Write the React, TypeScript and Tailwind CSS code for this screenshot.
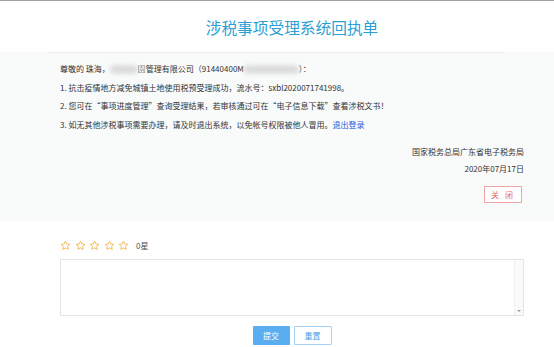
import React from "react";

function Star() {
  return (
    <svg width="11" height="11" viewBox="0 0 24 24" fill="none" stroke="#f4b650" strokeWidth="2" strokeLinejoin="round">
      <polygon points="12,2.5 14.9,8.6 21.5,9.4 16.6,13.9 17.9,20.5 12,17.2 6.1,20.5 7.4,13.9 2.5,9.4 9.1,8.6" />
    </svg>
  );
}

function Blur({ w }: { w: number }) {
  return (
    <span
      className="inline-block h-[9px] align-middle rounded-full bg-[#dcdcdc] blur-[2px]"
      style={{ width: w }}
    />
  );
}

export default function App() {
  const font = { fontFamily: '"Noto Sans CJK SC", "Noto Sans", sans-serif' };
  return (
    <div className="w-[554px] h-[347px] bg-white overflow-hidden border-t border-[#9ea2a6]" style={font}>
      <div className="h-[51px] flex items-center justify-center pl-[30px] pt-[3px]">
        <h1 className="text-[15.7px] leading-none text-[#2b9fd3] tracking-[0px]">涉税事项受理系统回执单</h1>
      </div>
      <div className="bg-[#f9fafa] pb-[18px]">
        <div className="ml-[48px] w-[455px] h-px bg-[#ececec]" />
        <div className="ml-[60px] w-[464px] pt-[7px] text-[8px] text-[#333]">
          <div className="leading-[18.5px] whitespace-nowrap">
            <p>
              尊敬的 珠海，<Blur w={28} />
              <span className="opacity-60">園</span>管理有限公司（91440400M<Blur w={55} />）：
            </p>
            <p>1. 抗击疫情地方减免城镇土地使用税预受理成功，流水号：sxbl2020071741998。</p>
            <p>2. 您可在“事项进度管理”查询受理结果，若审核通过可在“电子信息下载”查看涉税文书！</p>
            <p>
              3. 如无其他涉税事项需要办理，请及时退出系统，以免帐号权限被他人冒用。
              <span className="text-[#2b56e0]">退出登录</span>
            </p>
          </div>
          <div className="mt-[9px] flex flex-col items-end leading-[17px]">
            <p>国家税务总局广东省电子税务局</p>
            <p>2020年07月17日</p>
            <button className="mt-[9px] mr-[2px] w-[38px] h-[17px] border border-[#f2a5a5] bg-white text-[#e06666] text-[8px] leading-none tracking-[2px] flex items-center justify-center">
              关 闭
            </button>
          </div>
        </div>
      </div>
      <div className="ml-[60px] w-[464px]">
        <div className="mt-[19px] flex items-center h-[11px]">
          <div className="flex gap-[3.5px]">
            <Star />
            <Star />
            <Star />
            <Star />
            <Star />
          </div>
          <span className="ml-[7px] text-[8px] text-[#555] leading-none">0星</span>
        </div>
        <div className="mt-[8px] relative h-[57px] border border-[#e4e4e4] bg-white">
          <div className="absolute right-0 top-0 bottom-0 w-[9px] bg-[#fafafa] border-l border-[#f0f0f0] flex items-end justify-center pb-[3px]">
            <span className="block w-0 h-0 border-l-[2px] border-r-[2px] border-t-[2px] border-l-transparent border-r-transparent border-t-[#999]" />
          </div>
        </div>
        <div className="mt-[10px] flex justify-center gap-[4px]">
          <button className="w-[37px] h-[19px] bg-[#5aaef0] text-white text-[8px] leading-none rounded-[1px]">提交</button>
          <button className="w-[38px] h-[19px] bg-white border border-[#a6d3f5] text-[#4aa2e8] text-[8px] leading-none rounded-[1px]">重置</button>
        </div>
      </div>
    </div>
  );
}
